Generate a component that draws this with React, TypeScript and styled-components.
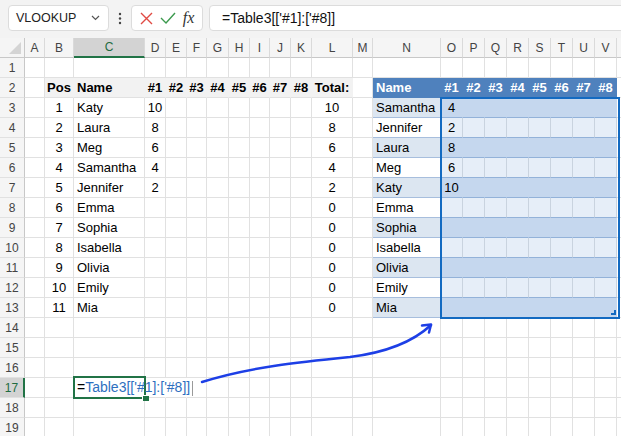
import React from "react";
import styled, { createGlobalStyle } from "styled-components";

const GlobalStyle = createGlobalStyle`
  body {
    margin: 0;
    background: #ffffff;
    font-family: "Liberation Sans", Arial, sans-serif;
    overflow: hidden;
  }
`;

const Window = styled.div`
  position: relative;
  width: 621px;
  height: 436px;
  overflow: hidden;
  background: #ffffff;
`;

const FormulaBar = styled.div`
  display: flex;
  align-items: center;
  height: 38px;
  box-sizing: border-box;
  padding: 0 0 2px 8px;
  background: #f3f3f3;
  gap: 0;
`;

const NameBox = styled.div`
  box-sizing: border-box;
  width: 101px;
  height: 26px;
  display: flex;
  align-items: center;
  justify-content: space-between;
  padding: 0 8px 0 7px;
  background: #ffffff;
  border: 1px solid #dcdcdc;
  border-radius: 4px;
  font-size: 12.5px;
  color: #222;
`;

const Dots = styled.div`
  width: 22px;
  display: flex;
  justify-content: center;
`;

const ActionBox = styled.div`
  box-sizing: border-box;
  width: 72px;
  height: 26px;
  display: flex;
  align-items: center;
  justify-content: space-around;
  padding: 0 4px;
  background: #ffffff;
  border: 1px solid #dcdcdc;
  border-radius: 4px;
`;

const Fx = styled.span`
  font-family: "Liberation Serif", "Times New Roman", serif;
  font-style: italic;
  font-size: 16px;
  color: #333;
`;

const FormulaInput = styled.div`
  box-sizing: border-box;
  flex: 1;
  height: 26px;
  margin-left: 6px;
  margin-right: -8px;
  display: flex;
  align-items: center;
  padding-left: 12px;
  background: #ffffff;
  border: 1px solid #dcdcdc;
  border-radius: 4px;
  font-size: 14px;
  color: #111;
`;

const Sheet = styled.div<{ $cols: string }>`
  display: grid;
  grid-template-columns: ${(p) => p.$cols};
  grid-auto-rows: 20px;
  font-size: 13px;
  color: #000;
`;

const ColHead = styled.div<{ $active?: boolean }>`
  box-sizing: border-box;
  display: flex;
  align-items: center;
  justify-content: center;
  overflow: hidden;
  font-family: "Liberation Sans", Arial, sans-serif;
  font-size: 12px;
  color: ${(p) => (p.$active ? "#1e6b41" : "#444")};
  background: ${(p) => (p.$active ? "#d3d3d3" : "#f5f5f5")};
  border-right: 1px solid #dadada;
  border-bottom: ${(p) => (p.$active ? "2px solid #217346" : "1px solid #c8c8c8")};
`;

const Corner = styled.div`
  position: relative;
  box-sizing: border-box;
  background: #f5f5f5;
  border-right: 1px solid #c8c8c8;
  border-bottom: 1px solid #c8c8c8;
  &::after {
    content: "";
    position: absolute;
    right: 3px;
    bottom: 3px;
    width: 12px;
    height: 12px;
    background: #d4d4d4;
    clip-path: polygon(100% 0, 100% 100%, 0 100%);
  }
`;

const RowHead = styled.div<{ $active?: boolean }>`
  box-sizing: border-box;
  display: flex;
  align-items: center;
  justify-content: center;
  font-size: 12px;
  color: ${(p) => (p.$active ? "#1e6b41" : "#444")};
  background: ${(p) => (p.$active ? "#d3d3d3" : "#f5f5f5")};
  border-right: ${(p) => (p.$active ? "2px solid #217346" : "1px solid #c8c8c8")};
  border-bottom: 1px solid #e1e1e1;
`;

const Cell = styled.div<{
  $bg?: string;
  $center?: boolean;
  $bold?: boolean;
  $color?: string;
  $line?: string;
  $vline?: string;
}>`
  box-sizing: border-box;
  min-width: 0;
  display: flex;
  align-items: center;
  justify-content: ${(p) => (p.$center ? "center" : "flex-start")};
  padding: 0 3px;
  white-space: nowrap;
  overflow: visible;
  background: ${(p) => p.$bg || "transparent"};
  color: ${(p) => p.$color || "#000"};
  font-weight: ${(p) => (p.$bold ? 700 : 400)};
  border-right: 1px solid ${(p) => p.$vline || "#e1e1e1"};
  border-bottom: 1px solid ${(p) => p.$line || "#e1e1e1"};
`;

const FormulaText = styled.span`
  position: relative;
  z-index: 2;
  font-size: 14px;
  color: #2e6fc0;
  &::before {
    content: "=";
    color: #000;
  }
`;

const Caret = styled.span`
  display: inline-block;
  width: 1px;
  height: 15px;
  margin-left: 2px;
  vertical-align: middle;
  background: #9a9a9a;
`;

const RefHighlight = styled.div`
  position: absolute;
  left: 440px;
  top: 97px;
  width: 180px;
  height: 222px;
  box-sizing: border-box;
  border: 2px solid #136ac1;
  pointer-events: none;
`;

const RefHandle = styled.span`
  position: absolute;
  right: 2px;
  bottom: 2px;
  width: 3px;
  height: 3px;
  border-right: 2px solid #136ac1;
  border-bottom: 2px solid #136ac1;
`;

const ActiveCell = styled.div`
  position: absolute;
  left: 73px;
  top: 376px;
  width: 73px;
  height: 23px;
  box-sizing: border-box;
  border: 2px solid #217346;
  pointer-events: none;
`;

const FillHandle = styled.span`
  position: absolute;
  right: -5px;
  bottom: -4px;
  width: 6px;
  height: 5px;
  background: #217346;
  border-left: 1px solid #fff;
  border-top: 1px solid #fff;
`;

const ArrowLayer = styled.svg`
  position: absolute;
  left: 0;
  top: 0;
  pointer-events: none;
`;

const COLS = [
  { key: "A", w: 20 },
  { key: "B", w: 29 },
  { key: "C", w: 71 },
  { key: "D", w: 21 },
  { key: "E", w: 21 },
  { key: "F", w: 20 },
  { key: "G", w: 22 },
  { key: "H", w: 21 },
  { key: "I", w: 20 },
  { key: "J", w: 21 },
  { key: "K", w: 21 },
  { key: "L", w: 41 },
  { key: "M", w: 20 },
  { key: "N", w: 68 },
  { key: "O", w: 22 },
  { key: "P", w: 22 },
  { key: "Q", w: 22 },
  { key: "R", w: 22 },
  { key: "S", w: 22 },
  { key: "T", w: 22 },
  { key: "U", w: 22 },
  { key: "V", w: 22 },
  // only a sliver of W shows at the right edge
  { key: "", w: 30 },
];

const players: [string, number | null][] = [
  ["Katy", 10],
  ["Laura", 8],
  ["Meg", 6],
  ["Samantha", 4],
  ["Jennifer", 2],
  ["Emma", null],
  ["Sophia", null],
  ["Isabella", null],
  ["Olivia", null],
  ["Emily", null],
  ["Mia", null],
];

const ranked: [string, number | null][] = [
  ["Samantha", 4],
  ["Jennifer", 2],
  ["Laura", 8],
  ["Meg", 6],
  ["Katy", 10],
  ["Emma", null],
  ["Sophia", null],
  ["Isabella", null],
  ["Olivia", null],
  ["Emily", null],
  ["Mia", null],
];

const HEAD_GRAY = "#f2f2f2";
const TABLE_BLUE = "#4f81bd";
const BAND = "#dce6f1";
const TABLE_LINE = "#a7bedd";
const TINT_DARK = "#c5d7ee";
const TINT_LIGHT = "#e6eef8";

type CellSpec = {
  text?: React.ReactNode;
  bg?: string;
  center?: boolean;
  bold?: boolean;
  color?: string;
  line?: string;
  vline?: string;
};

const cellFor = (row: number, ci: number): CellSpec => {
  const col = COLS[ci].key;
  if (row === 2) {
    if (col === "B") return { text: "Pos", bg: HEAD_GRAY, vline: HEAD_GRAY, bold: true, center: true };
    if (col === "C") return { text: "Name", bg: HEAD_GRAY, vline: HEAD_GRAY, bold: true };
    if (ci >= 3 && ci <= 10)
      return { text: `#${ci - 2}`, bg: HEAD_GRAY, vline: HEAD_GRAY, bold: true, center: true };
    if (col === "L") return { text: "Total:", bg: HEAD_GRAY, vline: HEAD_GRAY, bold: true, center: true };
    if (col === "N")
      return { text: "Name", bg: TABLE_BLUE, vline: TABLE_BLUE, line: TABLE_BLUE, bold: true, color: "#fff" };
    if (ci >= 14 && ci <= 21)
      return {
        text: `#${ci - 13}`,
        bg: TABLE_BLUE,
        vline: TABLE_BLUE,
        line: TABLE_BLUE,
        bold: true,
        color: "#fff",
        center: true,
      };
  }
  if (row >= 3 && row <= 13) {
    const i = row - 3;
    const [name, score] = players[i];
    const [rName, rScore] = ranked[i];
    const odd = i % 2 === 0;
    if (col === "B") return { text: i + 1, center: true };
    if (col === "C") return { text: name };
    if (col === "D") return { text: score ?? "", center: true };
    if (col === "L") return { text: score ?? 0, center: true };
    if (col === "N")
      return { text: rName, bg: odd ? BAND : "#fff", line: TABLE_LINE, vline: "#c9d3df" };
    if (ci >= 14 && ci <= 21)
      return {
        text: col === "O" ? rScore ?? "" : "",
        center: true,
        bg: odd ? TINT_DARK : TINT_LIGHT,
        vline: odd ? TINT_DARK : "#c9d3df",
        line: "#93b2d9",
      };
  }
  if (row === 17) {
    if (col === "C")
      return {
        text: (
          <FormulaText>
            {"Table3[['#1]:['#8]]"}
            <Caret />
          </FormulaText>
        ),
      };
    if (col === "D" || col === "E") return { vline: "#ffffff" };
  }
  return {};
};

const ROWS = Array.from({ length: 19 }, (_, i) => i + 1);

const App = () => {
  const template = ["25px", ...COLS.map((c) => `${c.w}px`)].join(" ");
  return (
    <Window>
      <GlobalStyle />
      <FormulaBar>
        <NameBox>
          <span>VLOOKUP</span>
          <svg width="9" height="6" viewBox="0 0 9 6">
            <path d="M1 1 L4.5 4.5 L8 1" stroke="#555" strokeWidth="1.2" fill="none" />
          </svg>
        </NameBox>
        <Dots>
          <svg width="4" height="13" viewBox="0 0 4 13">
            <circle cx="2" cy="2" r="1.2" fill="#444" />
            <circle cx="2" cy="6.5" r="1.2" fill="#444" />
            <circle cx="2" cy="11" r="1.2" fill="#444" />
          </svg>
        </Dots>
        <ActionBox>
          <svg width="13" height="13" viewBox="0 0 13 13">
            <path d="M1 1 L12 12 M12 1 L1 12" stroke="#e04a43" strokeWidth="1.4" />
          </svg>
          <svg width="16" height="12" viewBox="0 0 16 12">
            <path d="M1 6 L6 11 L15 1" stroke="#3c9a4e" strokeWidth="1.4" fill="none" />
          </svg>
          <Fx>fx</Fx>
        </ActionBox>
        <FormulaInput>{"=Table3[['#1]:['#8]]"}</FormulaInput>
      </FormulaBar>

      <Sheet $cols={template}>
        <Corner />
        {COLS.map((c, ci) => (
          <ColHead key={ci} $active={c.key === "C"}>
            {c.key}
          </ColHead>
        ))}
        {ROWS.map((r) => (
          <React.Fragment key={r}>
            <RowHead $active={r === 17}>{r}</RowHead>
            {COLS.map((c, ci) => {
              const s = cellFor(r, ci);
              return (
                <Cell
                  key={ci}
                  $bg={s.bg}
                  $center={s.center}
                  $bold={s.bold}
                  $color={s.color}
                  $line={s.line}
                  $vline={s.vline}
                >
                  {s.text}
                </Cell>
              );
            })}
          </React.Fragment>
        ))}
      </Sheet>

      <RefHighlight>
        <RefHandle />
      </RefHighlight>
      <ActiveCell>
        <FillHandle />
      </ActiveCell>
      <ArrowLayer width="621" height="436" viewBox="0 0 621 436">
        <path
          d="M202 382 C 250 367, 300 362, 350 357 C 390 352, 415 340, 431 325"
          stroke="#1d3fe6"
          strokeWidth="2.5"
          fill="none"
          strokeLinecap="round"
        />
        <path
          d="M422 325.5 L431 324.5 L429 332.5"
          stroke="#1d3fe6"
          strokeWidth="2.5"
          fill="none"
          strokeLinecap="round"
          strokeLinejoin="round"
        />
      </ArrowLayer>
    </Window>
  );
};

export default App;
